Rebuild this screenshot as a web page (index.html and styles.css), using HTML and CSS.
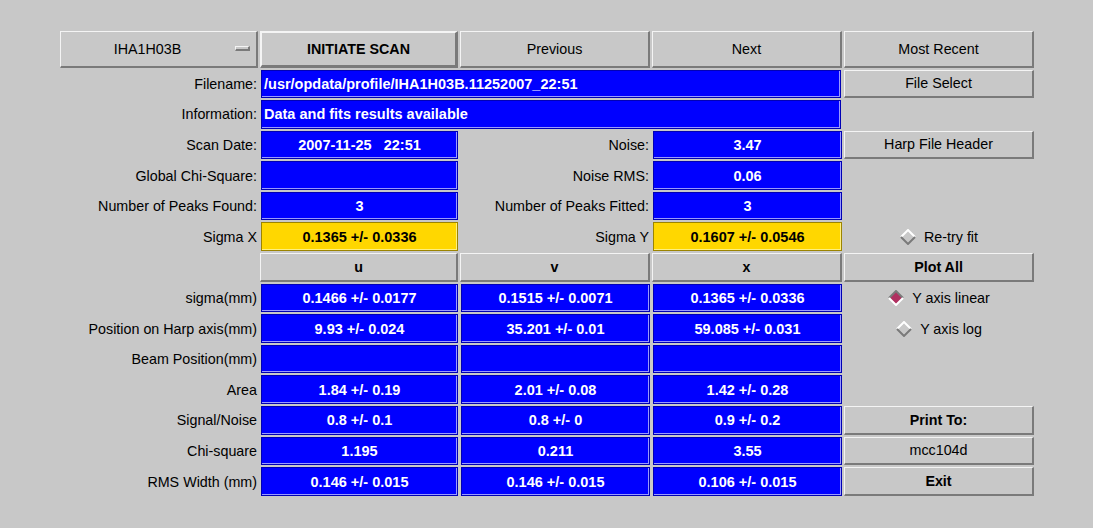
FILE: index.html
```html
<!DOCTYPE html>
<html>
<head>
<meta charset="utf-8">
<link rel="stylesheet" href="styles.css">
</head>
<body>
<div class="panel">
  <!-- row 0 -->
  <div class="btn menu"><span class="menu-text">IHA1H03B</span><span class="cascade"></span></div>
  <div class="btn bold default">INITIATE SCAN</div>
  <div class="btn">Previous</div>
  <div class="btn">Next</div>
  <div class="btn">Most Recent</div>

  <!-- filename -->
  <div class="label">Filename:</div>
  <div class="field wide left">/usr/opdata/profile/IHA1H03B.11252007_22:51</div>
  <div class="btn">File Select</div>

  <!-- information -->
  <div class="label">Information:</div>
  <div class="field wide left">Data and fits results available</div>
  <div class="empty"></div>

  <!-- scan date -->
  <div class="label">Scan Date:</div>
  <div class="field pre">2007-11-25   22:51</div>
  <div class="label">Noise:</div>
  <div class="field">3.47</div>
  <div class="btn">Harp File Header</div>

  <div class="label">Global Chi-Square:</div>
  <div class="field"></div>
  <div class="label">Noise RMS:</div>
  <div class="field">0.06</div>
  <div class="empty"></div>

  <div class="label">Number of Peaks Found:</div>
  <div class="field">3</div>
  <div class="label">Number of Peaks Fitted:</div>
  <div class="field">3</div>
  <div class="empty"></div>

  <div class="label">Sigma X</div>
  <div class="field yellow">0.1365 +/- 0.0336</div>
  <div class="label">Sigma Y</div>
  <div class="field yellow">0.1607 +/- 0.0546</div>
  <div class="radio retry"><svg class="diamond" viewBox="0 0 16 16" width="16" height="16"><polygon points="8,1 15,8 8,15 1,8" fill="#c8c8c8"/><polyline points="1,8 8,1 15,8" fill="none" stroke="#ffffff" stroke-width="2"/><polyline points="15,8 8,15 1,8" fill="none" stroke="#7a7a7a" stroke-width="2"/></svg><span>Re-try fit</span></div>

  <div class="empty"></div>
  <div class="btn bold">u</div>
  <div class="btn bold">v</div>
  <div class="btn bold">x</div>
  <div class="btn bold">Plot All</div>

  <div class="label">sigma(mm)</div>
  <div class="field">0.1466 +/- 0.0177</div>
  <div class="field">0.1515 +/- 0.0071</div>
  <div class="field">0.1365 +/- 0.0336</div>
  <div class="radio linear"><svg class="diamond" viewBox="0 0 16 16" width="16" height="16"><polygon points="8,1 15,8 8,15 1,8" fill="#b03060"/><polyline points="1,8 8,1 15,8" fill="none" stroke="#7a7a7a" stroke-width="2"/><polyline points="15,8 8,15 1,8" fill="none" stroke="#ffffff" stroke-width="2"/></svg><span>Y axis linear</span></div>

  <div class="label">Position on Harp axis(mm)</div>
  <div class="field">9.93 +/- 0.024</div>
  <div class="field">35.201 +/- 0.01</div>
  <div class="field">59.085 +/- 0.031</div>
  <div class="radio log"><svg class="diamond" viewBox="0 0 16 16" width="16" height="16"><polygon points="8,1 15,8 8,15 1,8" fill="#c8c8c8"/><polyline points="1,8 8,1 15,8" fill="none" stroke="#ffffff" stroke-width="2"/><polyline points="15,8 8,15 1,8" fill="none" stroke="#7a7a7a" stroke-width="2"/></svg><span>Y axis log</span></div>

  <div class="label">Beam Position(mm)</div>
  <div class="field"></div>
  <div class="field"></div>
  <div class="field"></div>
  <div class="empty"></div>

  <div class="label">Area</div>
  <div class="field">1.84 +/- 0.19</div>
  <div class="field">2.01 +/- 0.08</div>
  <div class="field">1.42 +/- 0.28</div>
  <div class="empty"></div>

  <div class="label">Signal/Noise</div>
  <div class="field">0.8 +/- 0.1</div>
  <div class="field">0.8 +/- 0</div>
  <div class="field">0.9 +/- 0.2</div>
  <div class="btn bold">Print To:</div>

  <div class="label">Chi-square</div>
  <div class="field">1.195</div>
  <div class="field">0.211</div>
  <div class="field">3.55</div>
  <div class="btn">mcc104d</div>

  <div class="label">RMS Width (mm)</div>
  <div class="field">0.146 +/- 0.015</div>
  <div class="field">0.146 +/- 0.015</div>
  <div class="field">0.106 +/- 0.015</div>
  <div class="btn bold">Exit</div>
</div>
</body>
</html>
```

FILE: styles.css
```css
html, body {
  margin: 0;
  padding: 0;
  background: #c8c8c8;
}
body {
  width: 1093px;
  height: 528px;
  overflow: hidden;
  font-family: "Liberation Sans", Arial, Helvetica, sans-serif;
  font-size: 14.3px;
  color: #000;
}
.panel {
  display: grid;
  grid-template-columns: 198px 198px 190px 190px 190px;
  grid-template-rows: 36.5px repeat(14, 28.6px);
  column-gap: 2px;
  row-gap: 2px;
  padding: 31px 0 0 60px;
}
.panel > div {
  box-sizing: border-box;
  display: flex;
  align-items: center;
  justify-content: center;
  white-space: nowrap;
  overflow: hidden;
}
.btn {
  background: #c8c8c8;
  border-style: solid;
  border-width: 1px 2px 2px 1px;
  border-color: #f4f4f4 #7a7a7a #7a7a7a #f4f4f4;
}
.btn.default {
  border-width: 2px 3px 3px 2px;
}
.bold {
  font-weight: bold;
}
.menu {
  position: relative;
}
.menu-text {
  margin-right: 22px;
}
.cascade {
  position: absolute;
  right: 6px;
  top: 14px;
  width: 15px;
  height: 5px;
  box-sizing: border-box;
  background: #c8c8c8;
  border-style: solid;
  border-width: 1px 2px 2px 1px;
  border-color: #f4f4f4 #7a7a7a #7a7a7a #f4f4f4;
}
.label {
  justify-content: flex-end !important;
  padding-right: 1px;
}
.field {
  background: #0000ff;
  color: #fff;
  font-weight: bold;
  font-size: 14.5px;
  border: 1px solid #0000b4;
  box-shadow: inset -1px -1px 0 #9a9aff;
  margin-left: 1px;
}
.field.wide {
  grid-column: span 3;
  margin-right: 1px;
}
.field.left {
  justify-content: flex-start !important;
  padding-left: 2px;
}
.field.pre {
  white-space: pre;
}
.field.yellow {
  background: #ffd700;
  color: #000;
  border-color: #9c8400;
  box-shadow: inset -1px -1px 0 #fff080;
}
.radio {
  gap: 8px;
}
.diamond {
  flex: none;
}
```
